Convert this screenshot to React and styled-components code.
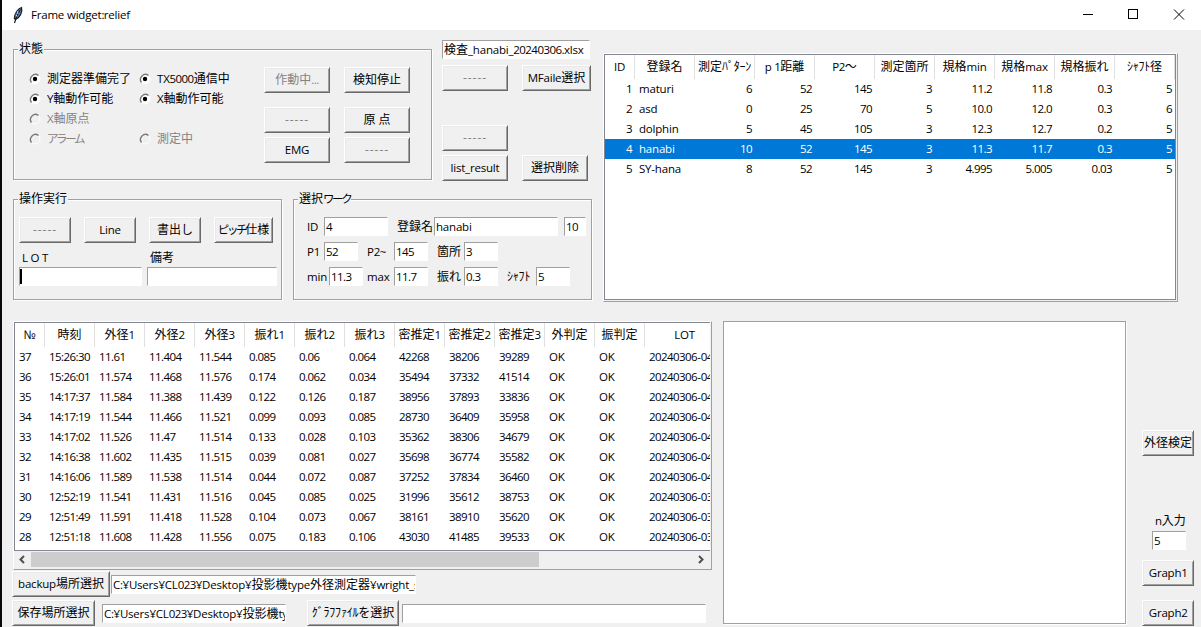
import React from 'react';
import styled, { createGlobalStyle, css } from 'styled-components';

const GlobalStyle = createGlobalStyle`
  * {
    box-sizing: border-box;
  }
  body {
    margin: 0;
    overflow: hidden;
    background: #f0f0f0;
    font-family: "Open Sans", "Noto Sans CJK JP", sans-serif;
    font-size: 12px;
    line-height: 18px;
    color: #000;
  }
`

const Run = styled.span`
  ${p => p.$kind === 'digit' && css`
    font-size: 11.5px;
    letter-spacing: -0.56px;
  `}
  ${p => p.$kind === 'latin' && css`
    font-size: 11.5px;
    letter-spacing: -0.2px;
  `}
  ${p => p.$kind === 'dash' && css`
    letter-spacing: 0.9px;
  `}
  ${p => p.$kind === 'half' && css`
    letter-spacing: -0.2px;
  `}
  ${p => p.$kind === 'kana' && css`
    font-size: 11.5px;
    letter-spacing: -2.4px;
  `}
`

// latin letters, digits and kana have different advances in the UI font
const kindOf = s => {
  if (/^--/.test(s)) return 'dash';
  if (/^[0-9.:]/.test(s)) return 'digit';
  if (/^[\uff61-\uff9f]/.test(s)) return 'half';
  if (/^[\u30a0-\u30ff]/.test(s)) return 'kana';
  if (/^[\x20-\x7e¥]/.test(s)) return 'latin';
  return 'wide';
}

const RUNS = /-{2,}|[0-9.:]+|[\uff61-\uff9f]+|[\u30a0-\u30ff]+|[\x20-\x2d\x2f\x3b-\x7e¥]+|[^\x20-\x7e¥\uff61-\uff9f\u30a0-\u30ff]+/g;

const Text = ({ children }) => {
  const runs = String(children).match(RUNS) || [];
  return <span>{runs.map((r, i) => <Run key={i} $kind={kindOf(r)}>{r}</Run>)}</span>;
}

const Screen = styled.div`
  display: flex;
  width: 1201px;
  height: 627px;
  overflow: hidden;
  white-space: pre;
`

const Edge = styled.div`
  flex: none;
  width: 2px;
  background: #0a0a0c;
`

const Window = styled.div`
  display: flex;
  flex-direction: column;
  width: 1199px;
  background: #f0f0f0;
`

const TitleBar = styled.div`
  display: flex;
  align-items: center;
  flex: none;
  height: 30px;
  padding-left: 8px;
  background: #fff;
`

const Title = styled.div`
  flex: 1;
  margin-left: 5px;
`

const Controls = styled.div`
  display: flex;
`

const Control = styled.svg`
  width: 45.5px;
  height: 30px;
  fill: none;
  stroke: #000;
  shape-rendering: ${p => p.$smooth ? 'auto' : 'crispEdges'};
`

const Upper = styled.div`
  display: flex;
  flex: none;
  height: 290px;
  padding-left: 11px;
`

const Lower = styled.div`
  display: flex;
  height: 307px;
  padding-left: 10px;
`

const UpperLeft = styled.div`
  width: 590px;
`

const Band = styled.div`
  display: flex;
`

const Frame = styled.div`
  position: relative;
  flex: none;
  width: ${p => p.$w}px;
  height: ${p => p.$h}px;
  margin: ${p => p.$m || 0};
  padding: ${p => p.$p};
  border: 1px solid #a0a0a0;
  box-shadow: 1px 1px 0 #fff, inset 1px 1px 0 #fff;
`

const FrameLabel = styled.div`
  position: absolute;
  top: -10px;
  left: 4px;
  padding: 0 1px;
  background: #f0f0f0;
`

const Row = styled.div`
  display: flex;
  align-items: flex-start;
  gap: ${p => p.$gap || 0}px;
  padding: ${p => p.$p || 0};
`

const Button = styled.div`
  display: flex;
  flex: none;
  align-items: center;
  justify-content: center;
  width: ${p => p.$w || 66}px;
  height: 26px;
  margin: ${p => p.$m || 0};
  border: 1px solid;
  border-color: #fff #696969 #696969 #fff;
  box-shadow: inset 1px 1px 0 #e9e9e9, inset -1px -1px 0 #a0a0a0;
  color: ${p => p.$off ? '#838383' : '#000'};
`

const Entry = styled.div`
  flex: none;
  display: flex;
  align-items: center;
  width: ${p => p.$w}px;
  height: 19px;
  margin: ${p => p.$m || 0};
  padding-left: 1px;
  overflow: hidden;
  border: 1px solid;
  border-color: #a0a0a0 #fff #fff #a0a0a0;
  background: #fff;
`

const Caret = styled.div`
  width: 2px;
  height: 15px;
  margin-left: -1px;
  background: #000;
`

const Label = styled.div`
  flex: none;
  width: ${p => p.$w}px;
  height: 18px;
  margin: ${p => p.$m || 0};
`

const Radios = styled.div`
  display: grid;
  grid-template-columns: 110px 110px;
  grid-auto-rows: 20px;
  width: 235px;
  margin-top: 2px;
`

const RadioItem = styled.div`
  display: flex;
  align-items: center;
  gap: 6px;
  color: ${p => p.$off ? '#838383' : '#000'};
`

const Buttons = styled.div`
  display: grid;
  grid-template-columns: 66px 66px;
  grid-template-rows: 40px 30px 26px;
  column-gap: 14px;
`

const Files = styled.div`
  padding: 10px 0 0 10px;
`

const Tree = styled.div`
  flex: none;
  width: ${p => p.$w}px;
  height: ${p => p.$h}px;
  margin-top: ${p => p.$top || 0}px;
  border: 1px solid;
  border-color: #fff #a0a0a0 #a0a0a0 #fff;
  background: #f0f0f0;
`

const TreeBody = styled.div`
  height: ${p => p.$h}px;
  margin-right: 1px;
  overflow: hidden;
  border: 1px solid #828790;
  border-right-width: ${p => p.$open ? 0 : 1}px;
  background: #fff;
`

const TreeRow = styled.div`
  display: grid;
  grid-template-columns: ${p => p.$cols};
  height: ${p => p.$head ? 24 : 20}px;
  line-height: ${p => p.$head ? 24 : 20}px;
  background: ${p => p.$selected ? '#0078d7' : 'transparent'};
  color: ${p => p.$selected ? '#fff' : '#000'};
`

const Th = styled.div`
  overflow: hidden;
  border-right: 1px solid #e0e0e0;
  text-align: center;
`

const Td = styled.div`
  overflow: hidden;
  padding: 0 3px 0 4px;
  text-align: ${p => p.$right ? 'right' : 'left'};
`

const ScrollBar = styled.div`
  display: flex;
  align-items: center;
  height: 17px;
  padding-right: 3px;
  justify-content: space-between;
`

const Thumb = styled.div`
  width: 508px;
  height: 15px;
  margin: 0 auto 0 1px;
  background: #cdcdcd;
`

const Arrow = styled.svg`
  width: 16px;
  height: 15px;
  fill: none;
  stroke: #505050;
  stroke-width: 2;
`

const Canvas = styled.div`
  flex: none;
  width: 403px;
  height: 303px;
  margin: 1px 0 0 11px;
  border: 1px solid #a0a0a0;
  box-shadow: inset 1px 1px 0 #fff, 1px 1px 0 #fff;
  background: #fff;
`

const Side = styled.div`
  display: flex;
  flex-direction: column;
  align-items: flex-start;
  padding: 110px 0 0 16px;
`

const Feather = () => (
  <svg width="16" height="18" viewBox="0 0 16 18">
    <path d="M11.5 1.5C8 2.5 4.8 7 4.3 12.5l1.2 1C9.5 12 13 6 11.5 1.5z" fill="#5d86b3" stroke="#14202e" strokeWidth="1.2" />
    <path d="M10.5 3.5C8 7 6 11 4.5 17" fill="none" stroke="#111" strokeWidth="1.1" />
    <path d="M7.3 5.2L8 8M6 8.5l.8 2" stroke="#cfe2f5" strokeWidth="1" />
  </svg>
)

const Radio = ({ on }) => (
  <svg width="12" height="12" viewBox="0 0 12 12">
    <circle cx="6" cy="6" r="5" fill={on ? '#fff' : '#f0f0f0'} stroke="#fff" />
    <path d="M2.5 9.5A5 5 0 0 1 9.5 2.5" fill="none" stroke="#777" strokeWidth="1.4" />
    {on && <circle cx="6" cy="6" r="2.2" fill="#000" />}
  </svg>
)

const radios = [
  ['測定器準備完了', true], ['TX5000通信中', true],
  ['Y軸動作可能', true], ['X軸動作可能', true],
  ['X軸原点', false], null,
  ['アラーム', false], ['測定中', false],
];

const workCols = '30px repeat(9, 60px)';
const workHead = ['ID', '登録名', '測定ﾊﾟﾀｰﾝ', 'p 1距離', 'P2〜', '測定箇所', '規格min', '規格max', '規格振れ', 'ｼｬﾌﾄ径'];
const works = [
  ['1', 'maturi', '6', '52', '145', '3', '11.2', '11.8', '0.3', '5'],
  ['2', 'asd', '0', '25', '70', '5', '10.0', '12.0', '0.3', '6'],
  ['3', 'dolphin', '5', '45', '105', '3', '12.3', '12.7', '0.2', '5'],
  ['4', 'hanabi', '10', '52', '145', '3', '11.3', '11.7', '0.3', '5'],
  ['5', 'SY-hana', '8', '52', '145', '3', '4.995', '5.005', '0.03', '5'],
];

const resultCols = '30px repeat(12, 50px) 80px';
const resultHead = ['№', '時刻', '外径1', '外径2', '外径3', '振れ1', '振れ2', '振れ3', '密推定1', '密推定2', '密推定3', '外判定', '振判定', 'LOT'];
const results = [
  '37 15:26:30 11.61 11.404 11.544 0.085 0.06 0.064 42268 38206 39289 OK OK 20240306-04',
  '36 15:26:01 11.574 11.468 11.576 0.174 0.062 0.034 35494 37332 41514 OK OK 20240306-04',
  '35 14:17:37 11.584 11.388 11.439 0.122 0.126 0.187 38956 37893 33836 OK OK 20240306-04',
  '34 14:17:19 11.544 11.466 11.521 0.099 0.093 0.085 28730 36409 35958 OK OK 20240306-04',
  '33 14:17:02 11.526 11.47 11.514 0.133 0.028 0.103 35362 38306 34679 OK OK 20240306-04',
  '32 14:16:38 11.602 11.435 11.515 0.039 0.081 0.027 35698 36774 35582 OK OK 20240306-04',
  '31 14:16:06 11.589 11.538 11.514 0.044 0.072 0.087 37252 37834 36460 OK OK 20240306-04',
  '30 12:52:19 11.541 11.431 11.516 0.045 0.085 0.025 31996 35612 38753 OK OK 20240306-03',
  '29 12:51:49 11.591 11.418 11.528 0.104 0.073 0.067 38161 38910 35620 OK OK 20240306-03',
  '28 12:51:18 11.608 11.428 11.556 0.075 0.183 0.106 43030 41485 39533 OK OK 20240306-03',
].map(line => line.split(' '));

const Status = () => (
  <Frame $w={419} $h={131} $m="19px 0 0" $p="17px 0 0 15px">
    <FrameLabel><Text>状態</Text></FrameLabel>
    <Row>
      <Radios>
        {radios.map((r, i) => r ? (
          <RadioItem key={i} $off={!r[1]}><Radio on={r[1]} /><Text>{r[0]}</Text></RadioItem>
        ) : <div key={i} />)}
      </Radios>
      <Buttons>
        <Button $off><Text>作動中...</Text></Button>
        <Button><Text>検知停止</Text></Button>
        <Button $off><Text>-----</Text></Button>
        <Button><Text>原 点</Text></Button>
        <Button><Text>EMG</Text></Button>
        <Button $off><Text>-----</Text></Button>
      </Buttons>
    </Row>
  </Frame>
)

const FileButtons = () => (
  <Files>
    <Entry $w={148}><Text>検査_hanabi_20240306.xlsx</Text></Entry>
    <Row $gap={14} $p="6px 0 34px">
      <Button $off><Text>-----</Text></Button>
      <Button $w={69}><Text>MFaile選択</Text></Button>
    </Row>
    <Button $off><Text>-----</Text></Button>
    <Row $gap={14} $p="4px 0 0">
      <Button><Text>list_result</Text></Button>
      <Button><Text>選択削除</Text></Button>
    </Row>
  </Files>
)

const Operation = () => (
  <Frame $w={269} $h={101} $p="17px 0 0 5px">
    <FrameLabel><Text>操作実行</Text></FrameLabel>
    <Row $gap={13}>
      <Button $w={52} $off><Text>-----</Text></Button>
      <Button $w={52}><Text>Line</Text></Button>
      <Button $w={52}><Text>書出し</Text></Button>
      <Button $w={59}><Text>ピッチ仕様</Text></Button>
    </Row>
    <Row $p="6px 0 0 3px">
      <Label $w={128}><Text>L O T</Text></Label>
      <Label><Text>備考</Text></Label>
    </Row>
    <Row $gap={5}>
      <Entry $w={123}><Caret /></Entry>
      <Entry $w={130} />
    </Row>
  </Frame>
)

const SelectedWork = () => (
  <Frame $w={299} $h={101} $m="0 0 0 11px" $p="17px 0 0 13px">
    <FrameLabel><Text>選択ワーク</Text></FrameLabel>
    <Row $p="0 0 6px">
      <Label $w={17} $m="1px 0 0"><Text>ID</Text></Label>
      <Entry $w={64} $m="0 9px 0 0"><Text>4</Text></Entry>
      <Label $w={37} $m="1px 0 0"><Text>登録名</Text></Label>
      <Entry $w={124} $m="0 6px 0 0"><Text>hanabi</Text></Entry>
      <Entry $w={22}><Text>10</Text></Entry>
    </Row>
    <Row $p="0 0 6px">
      <Label $w={17} $m="1px 0 0"><Text>P1</Text></Label>
      <Entry $w={34} $m="0 9px 0 0"><Text>52</Text></Entry>
      <Label $w={27} $m="1px 0 0"><Text>P2~</Text></Label>
      <Entry $w={34} $m="0 9px 0 0"><Text>145</Text></Entry>
      <Label $w={27} $m="1px 0 0"><Text>箇所</Text></Label>
      <Entry $w={34}><Text>3</Text></Entry>
    </Row>
    <Row>
      <Label $w={22} $m="1px 0 0"><Text>min</Text></Label>
      <Entry $w={34} $m="0 4px 0 0"><Text>11.3</Text></Entry>
      <Label $w={27} $m="1px 0 0"><Text>max</Text></Label>
      <Entry $w={34} $m="0 9px 0 0"><Text>11.7</Text></Entry>
      <Label $w={27} $m="1px 0 0"><Text>振れ</Text></Label>
      <Entry $w={34} $m="0 9px 0 0"><Text>0.3</Text></Entry>
      <Label $w={29} $m="1px 0 0"><Text>ｼｬﾌﾄ</Text></Label>
      <Entry $w={34}><Text>5</Text></Entry>
    </Row>
  </Frame>
)

const WorkTree = () => (
  <Tree $w={575} $h={249} $top={23}>
    <TreeBody $h={246}>
      <TreeRow $cols={workCols} $head>
        {workHead.map(h => <Th key={h}><Text>{h}</Text></Th>)}
      </TreeRow>
      {works.map(w => (
        <TreeRow key={w[0]} $cols={workCols} $selected={w[0] === '4'}>
          {w.map((v, i) => <Td key={i} $right={i !== 1}><Text>{v}</Text></Td>)}
        </TreeRow>
      ))}
    </TreeBody>
  </Tree>
)

const ResultTree = () => (
  <Tree $w={699} $h={249} $top={1}>
    <TreeBody $h={229} $open>
      <TreeRow $cols={resultCols} $head>
        {resultHead.map(h => <Th key={h}><Text>{h}</Text></Th>)}
      </TreeRow>
      {results.map(r => (
        <TreeRow key={r[0]} $cols={resultCols}>
          {r.map((v, i) => <Td key={i}><Text>{v}</Text></Td>)}
        </TreeRow>
      ))}
    </TreeBody>
    <ScrollBar>
      <Arrow viewBox="0 0 16 15"><path d="M10 4L6.5 7.5L10 11" /></Arrow>
      <Thumb />
      <Arrow viewBox="0 0 16 15"><path d="M7 4l3.5 3.5L7 11" /></Arrow>
    </ScrollBar>
  </Tree>
)

const App = () => (
  <Screen>
    <GlobalStyle />
    <Edge />
    <Window>
      <TitleBar>
        <Feather />
        <Title><Text>Frame widget:relief</Text></Title>
        <Controls>
          <Control viewBox="0 0 45.5 30"><path d="M17.5 14.5h10" /></Control>
          <Control viewBox="0 0 45.5 30"><path d="M18.5 9.5h9v9h-9z" /></Control>
          <Control viewBox="0 0 45.5 30" $smooth><path d="M18 9.5l10 10M28 9.5l-10 10" /></Control>
        </Controls>
      </TitleBar>
      <Upper>
        <UpperLeft>
          <Band>
            <Status />
            <FileButtons />
          </Band>
          <Row $p="18px 0 0">
            <Operation />
            <SelectedWork />
          </Row>
        </UpperLeft>
        <WorkTree />
      </Upper>
      <Lower>
        <div>
          <Row $p="0 0 0 1px"><ResultTree /></Row>
          <Row $p="1px 0 0" $gap={1}>
            <Button $w={98}><Text>backup場所選択</Text></Button>
            <Entry $w={305} $m="4px 0 0"><Text>C:¥Users¥CL023¥Desktop¥投影機type外径測定器¥wright_s</Text></Entry>
          </Row>
          <Row $p="3px 0 0">
            <Button $w={83} $m="0 7px 0 0"><Text>保存場所選択</Text></Button>
            <Entry $w={184} $m="4px 21px 0 0"><Text>C:¥Users¥CL023¥Desktop¥投影機type</Text></Entry>
            <Button $w={92} $m="0 3px 0 0"><Text>ｸﾞﾗﾌﾌｧｲﾙを選択</Text></Button>
            <Entry $w={304} $m="4px 0 0" />
          </Row>
        </div>
        <Canvas />
        <Side>
          <Button $w={52}><Text>外径検定</Text></Button>
          <Label $m="56px 0 0 13px"><Text>n入力</Text></Label>
          <Entry $w={34} $m="1px 0 10px 10px"><Text>5</Text></Entry>
          <Button $w={52} $m="0 0 14px"><Text>Graph1</Text></Button>
          <Button $w={52}><Text>Graph2</Text></Button>
        </Side>
      </Lower>
    </Window>
  </Screen>
)

export default App;
